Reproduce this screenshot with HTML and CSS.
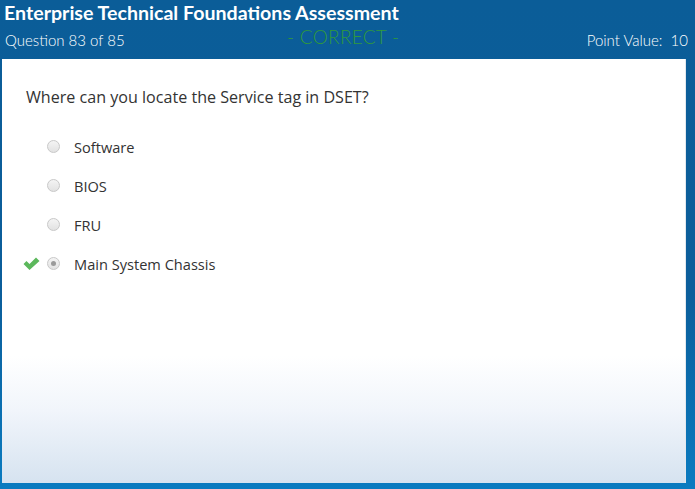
FILE: index.html
```html
<!DOCTYPE html>
<html lang="en">
<head>
  <meta charset="UTF-8">
  <title>Enterprise Technical Foundations Assessment</title>
  <link rel="stylesheet" href="styles.css">
</head>
<body>

<div class="app">
  <header>
    <div class="title">Enterprise Technical Foundations Assessment</div>
    <div class="status-row">
      <span class="counter">Question 83 of 85</span>
      <span class="result">- CORRECT -</span>
      <span class="points">Point Value:&nbsp; 10</span>
    </div>
  </header>

  <section class="panel">
    <p class="question">Where can you locate the Service tag in DSET?</p>
    <ul class="answers">
      <li class="answer">
        <span class="mark"></span>
        <span class="radio"></span>
        <span class="label">Software</span>
      </li>
      <li class="answer">
        <span class="mark"></span>
        <span class="radio"></span>
        <span class="label">BIOS</span>
      </li>
      <li class="answer">
        <span class="mark"></span>
        <span class="radio"></span>
        <span class="label">FRU</span>
      </li>
      <li class="answer chosen">
        <span class="mark">
          <svg width="17" height="13" viewBox="0 0 17 13">
            <path d="M0.5 7 L3.5 4 L6.5 7 L13 0.5 L16.5 4 L6.5 13 Z" fill="#5cb85c"/>
          </svg>
        </span>
        <span class="radio"></span>
        <span class="label">Main System Chassis</span>
      </li>
    </ul>
  </section>
</div>

</body>
</html>
```

FILE: styles.css
```css
body {
  margin: 0;
  padding: 0;
  font-family: "Open Sans", Arial, sans-serif;
}

.app {
  width: 695px;
  height: 489px;
  background: linear-gradient(#0b5d98, #0b5e9b 60%, #0a7bc0);
  display: flex;
  flex-direction: column;
}

/* Header */
header {
  height: 59px;
  color: #ffffff;
  font-family: Lato, Arial, sans-serif;
}

header .title {
  font-size: 19.6px;
  font-weight: bold;
  padding: 1px 0 0 4px;
  line-height: 23px;
}

.status-row {
  display: flex;
  align-items: flex-start;
  padding: 7px 7px 0 5px;
  font-size: 15px;
  font-weight: 300;
  line-height: 18px;
}

.status-row .counter {
  width: 282px;
}

.status-row .result {
  color: #2f9a3a;
  font-size: 19px;
  line-height: 20px;
  margin-top: -4px;
  letter-spacing: 0.3px;
}

.status-row .points {
  margin-left: auto;
}

/* Question panel */
.panel {
  margin: 0 9px 6px 2px;
  flex: 1;
  background: linear-gradient(#ffffff 0%, #ffffff 70%, #f1f5fb 83%, #d6e3f0 100%);
  border-right: 1px solid #e3e8ee;
  padding: 27px 0 0 0;
}

.question {
  margin: 0 0 0 24px;
  font-size: 16.1px;
  line-height: 22px;
  color: #333333;
}

.answers {
  list-style: none;
  margin: 19px 0 0 0;
  padding: 0;
}

.answer {
  display: flex;
  align-items: center;
  height: 39px;
  color: #333333;
  font-size: 14.6px;
}

.answer .mark {
  width: 45px;
  display: flex;
  justify-content: flex-end;
  padding-right: 7px;
  box-sizing: border-box;
}

.answer .radio {
  width: 11px;
  height: 11px;
  border: 1px solid #c8c8c8;
  border-radius: 50%;
  background: linear-gradient(#f4f4f4, #e2e2e2);
  margin-right: 14px;
  position: relative;
}

.answer.chosen .radio::after {
  content: "";
  position: absolute;
  left: 3px;
  top: 3px;
  width: 5px;
  height: 5px;
  border-radius: 50%;
  background: #9a9a9a;
}
```
